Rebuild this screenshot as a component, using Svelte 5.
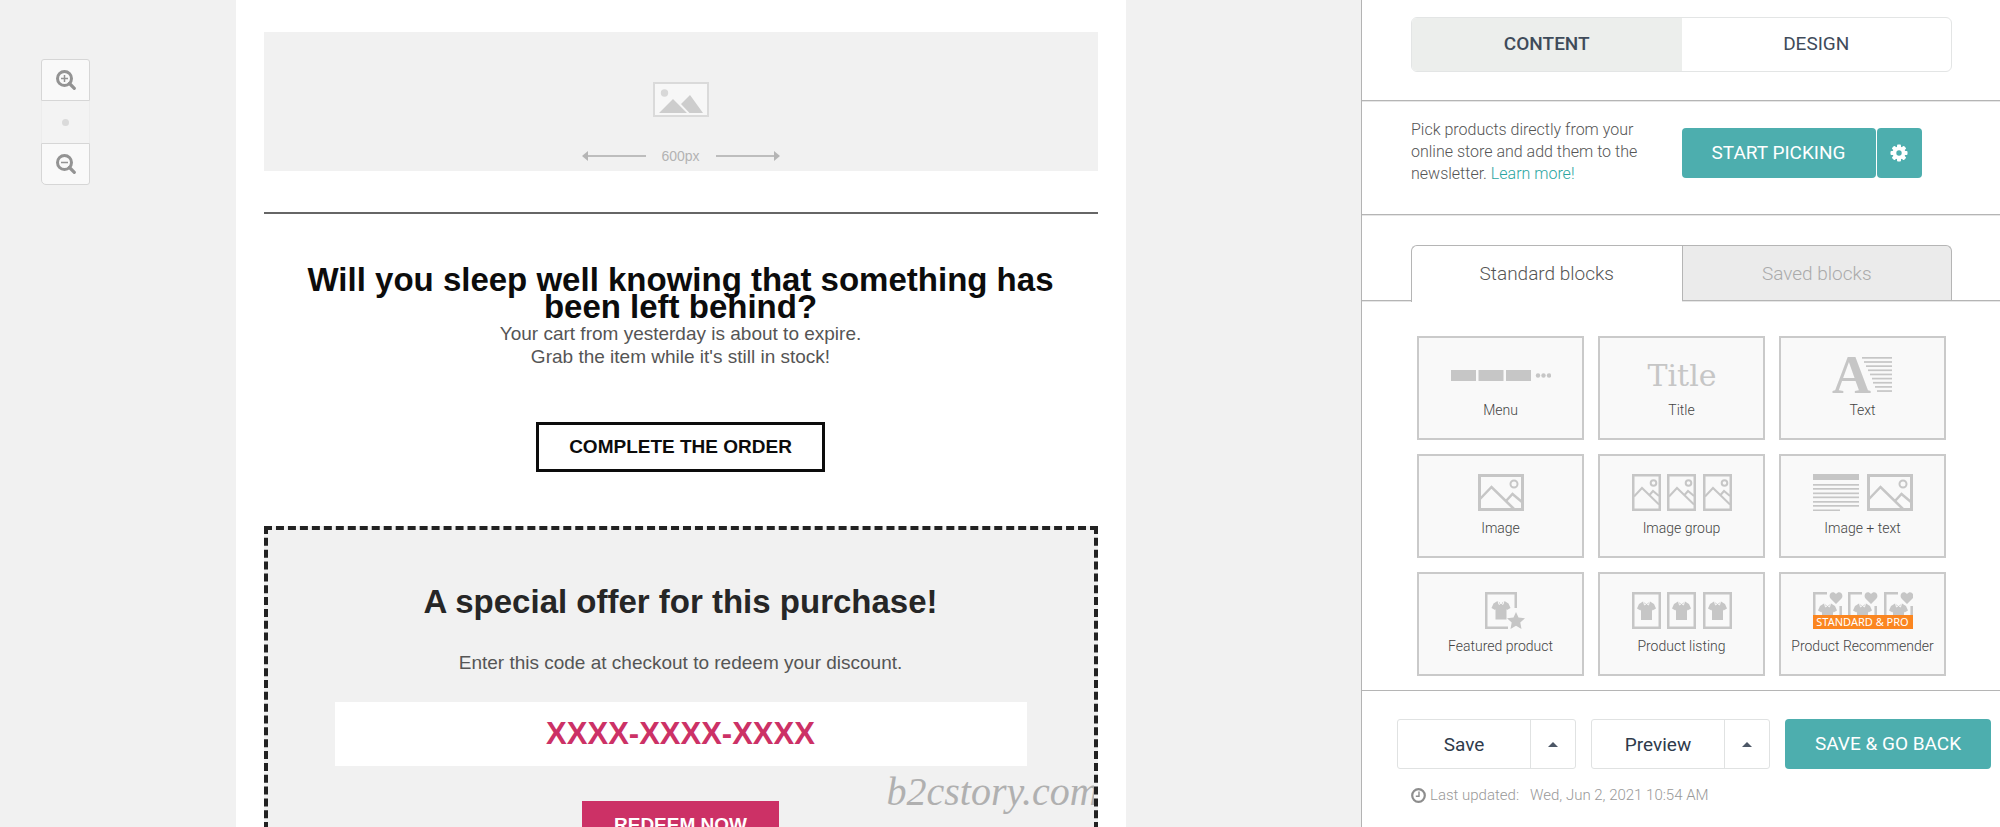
<script>
  const blocks = [
    { id: 'menu', label: 'Menu' },
    { id: 'title', label: 'Title' },
    { id: 'text', label: 'Text' },
    { id: 'image', label: 'Image' },
    { id: 'group', label: 'Image group' },
    { id: 'imagetext', label: 'Image + text' },
    { id: 'featured', label: 'Featured product' },
    { id: 'listing', label: 'Product listing' },
    { id: 'recommender', label: 'Product Recommender' }
  ];
  const slots = [0, 35, 71];
  const textLines = [49, 51, 53, 55, 57, 59, 60, 62, 64];
  let panel = $state('content');
  let library = $state('standard');
</script>

{#snippet picture(x)}
  <g transform="translate({x} 0)">
    <rect x="1.5" y="1.5" width="43" height="34" class="frame wide" />
    <path d="M2 25L13.500 13L36 35M28 27L34.500 20L44 28" class="frame" />
    <circle cx="36" cy="10" r="3.500" class="frame thin" />
  </g>
{/snippet}

{#snippet smallPicture(x)}
  <g transform="translate({x} 0)">
    <rect x="1.250" y="1.250" width="26.500" height="34.500" class="frame" />
    <path d="M2 22.500L10 14L27 30.500M17.500 21L21 17L27 22" class="frame thin" />
    <circle cx="21.500" cy="9" r="2.800" class="frame thin" />
  </g>
{/snippet}

{#snippet shirt(x, y)}
  <path
    transform="translate({x} {y})"
    class="fill"
    d="M6 0.500L9.500 3L13 0.500L17 3L19 7.500L15.500 9.500L15 8.500V19H4V8.500L3.500 9.500L0 7.500L2 3Z"
  />
  <path transform="translate({x} {y})" class="collar" d="M6.500 0.500L7.500 4L9.500 2.500L11.500 4L12.500 0.500" />
{/snippet}

{#snippet blockIcon(id)}
  <svg class="block-icon" viewBox="0 0 100 38" aria-hidden="true">
    {#if id === 'menu'}
      <rect x="0" y="14" width="25" height="11" class="fill" />
      <rect x="27.500" y="14" width="25" height="11" class="fill" />
      <rect x="55" y="14" width="25" height="11" class="fill" />
      <circle cx="87" cy="19.500" r="2.200" class="fill" />
      <circle cx="92.500" cy="19.500" r="2.200" class="fill" />
      <circle cx="98" cy="19.500" r="2.200" class="fill" />
    {:else if id === 'title'}
      <text x="50" y="30" text-anchor="middle" class="title-glyphs">Title</text>
    {:else if id === 'text'}
      <text x="19" y="37" class="letter">A</text>
      {#each textLines as left, i}
        <rect x={left} y={1 + i * 4.15} width={79 - left} height="1.700" class="fill" />
      {/each}
    {:else if id === 'image'}
      {@render picture(27)}
    {:else if id === 'group'}
      {#each slots as x}{@render smallPicture(x)}{/each}
    {:else if id === 'imagetext'}
      <rect x="0" y="0" width="46" height="6" class="fill" />
      {#each [10, 14, 18.5, 22.5, 27, 31] as y}
        <rect x="0" {y} width="46" height="1.700" class="fill" />
      {/each}
      <rect x="0" y="35.500" width="27" height="1.500" class="fill" />
      {@render picture(54)}
    {:else if id === 'featured'}
      <path d="M64.750 16V1.250H35.250V35.750H57" class="frame" />
      {@render shirt(40.5, 8.5)}
      <path class="fill" d="M65 20L67.500 25.500L74 26.300L69.300 30.500L70.500 37L65 33.800L59.500 37L60.700 30.500L56 26.300L62.500 25.500Z" />
    {:else if id === 'listing'}
      {#each slots as x}
        <rect x={x + 1.25} y="1.250" width="26.500" height="34.500" class="frame" />
        {@render shirt(x + 5, 9)}
      {/each}
    {:else}
      {#each slots as x}
        <path transform="translate({x} 0)" d="M14 1.250H1.250V25M27.700 14V25" class="frame" />
        {@render shirt(x + 5, 11)}
        <path transform="translate({x} 0)" class="fill" d="M23 12L17.500 6.500C14.500 2.500 19.500 -2.500 23 2C26.500 -2.500 31.500 2.500 28.500 6.500Z" />
      {/each}
    {/if}
  </svg>
{/snippet}

{#snippet magnifier(plus)}
  <svg width="20" height="20" viewBox="0 0 20 20" aria-hidden="true">
    <circle cx="8.500" cy="8.500" r="7" fill="none" stroke="#939393" stroke-width="3" />
    <path d="M13.500 13.500L18.300 18.300" stroke="#939393" stroke-width="3.200" stroke-linecap="round" />
    <path d={plus ? 'M5 8.500H12M8.500 5V12' : 'M5 8.500H12'} stroke="#939393" stroke-width="1.500" />
  </svg>
{/snippet}

<div class="editor">
  <main class="stage">
    <div class="zoom">
      <button aria-label="Zoom in">{@render magnifier(true)}</button>
      <button class="reset" aria-label="Reset zoom"><span></span></button>
      <button aria-label="Zoom out">{@render magnifier(false)}</button>
    </div>

    <article class="mail">
      <div class="placeholder">
        <svg width="56" height="35" viewBox="0 0 56 35" aria-hidden="true">
          <rect x="1" y="1" width="54" height="33" fill="#f7f7f7" stroke="#dadada" stroke-width="2" />
          <circle cx="11.500" cy="11" r="3.700" fill="#d8d8d8" />
          <path d="M6 31L20 17L34 31ZM28 22L37 13L50 31H36.500Z" fill="#cdcdcd" />
        </svg>
        <div class="measure">
          <svg width="64" height="10" viewBox="0 0 64 10" aria-hidden="true">
            <path d="M5 5H64" stroke="#bdbdbd" stroke-width="2" /><path d="M0 5L6 0V10Z" fill="#b5b5b5" />
          </svg>
          <span>600px</span>
          <svg width="64" height="10" viewBox="0 0 64 10" aria-hidden="true">
            <path d="M0 5H59" stroke="#bdbdbd" stroke-width="2" /><path d="M64 5L58 0V10Z" fill="#b5b5b5" />
          </svg>
        </div>
      </div>
      <hr />
      <h1>Will you sleep well knowing that something has been left behind?</h1>
      <p>Your cart from yesterday is about to expire.<br />Grab the item while it's still in stock!</p>
      <a class="order" href="#order">COMPLETE THE ORDER</a>
      <section class="coupon">
        <h2>A special offer for this purchase!</h2>
        <p>Enter this code at checkout to redeem your discount.</p>
        <div class="code">XXXX-XXXX-XXXX</div>
        <a class="redeem" href="#redeem">REDEEM NOW</a>
        <span class="watermark">b2cstory.com</span>
      </section>
    </article>
  </main>

  <aside>
    <div class="section modes">
      <div class="switch">
        <button class:active={panel === 'content'} onclick={() => (panel = 'content')}>CONTENT</button>
        <button class:active={panel === 'design'} onclick={() => (panel = 'design')}>DESIGN</button>
      </div>
    </div>

    <div class="section picker">
      <p>Pick products directly from your online store and add them to the newsletter. <a href="#learn">Learn more!</a></p>
      <div class="pick">
        <button class="primary">START PICKING</button>
        <button class="primary gear" aria-label="Picking settings">
          <svg width="18" height="18" viewBox="0 0 18 18" aria-hidden="true">
            <g fill="#fff">
              {#each [0, 45, 90, 135] as a}
                <rect x="7" y="0.500" width="4" height="17" rx="1" transform="rotate({a} 9 9)" />
              {/each}
              <circle cx="9" cy="9" r="6.500" />
            </g>
            <circle cx="9" cy="9" r="2.700" fill="#4daeae" />
          </svg>
        </button>
      </div>
    </div>

    <div class="tabs">
      <button class:active={library === 'standard'} onclick={() => (library = 'standard')}>Standard blocks</button>
      <button class:active={library === 'saved'} onclick={() => (library = 'saved')}>Saved blocks</button>
    </div>

    <div class="blocks">
      {#each blocks as block}
        <button class="block">
          {@render blockIcon(block.id)}
          {#if block.id === 'recommender'}<span class="badge">STANDARD &amp; PRO</span>{/if}
          <span class="name">{block.label}</span>
        </button>
      {/each}
    </div>

    <footer>
      <div class="actions">
        <div class="split">
          <button>Save</button>
          <button class="caret" aria-label="More save options"><i></i></button>
        </div>
        <div class="split">
          <button>Preview</button>
          <button class="caret" aria-label="More preview options"><i></i></button>
        </div>
        <button class="primary back">SAVE &amp; GO BACK</button>
      </div>
      <div class="updated">
        <svg width="15" height="15" viewBox="0 0 15 15" fill="none" stroke="#8d8d8d" aria-hidden="true">
          <circle cx="7.500" cy="7.500" r="6.300" stroke-width="2.200" />
          <path d="M8 3.500V8.300H4.800" stroke-width="1.400" />
        </svg>
        <span>Last updated:</span>
        <time>Wed, Jun 2, 2021 10:54 AM</time>
      </div>
    </footer>
  </aside>
</div>

<style>
  :global(body) { margin: 0; }
  * { box-sizing: border-box; }
  button { font: inherit; margin: 0; padding: 0; border: 0; background: none; color: inherit; cursor: pointer; }
  a { text-decoration: none; }
  svg { display: block; }

  .editor {
    display: grid;
    grid-template-columns: minmax(0, 1fr) 639px;
    height: 100vh;
    overflow: hidden;
    background: #f1f1f1;
    font-family: Roboto, sans-serif;
  }

  .stage { position: relative; min-width: 0; overflow: hidden; }
  .zoom {
    position: absolute;
    top: 59px;
    left: 41px;
    width: 49px;
    display: grid;
    grid-template-rows: repeat(3, 42px);
  }
  .zoom button {
    display: grid;
    place-items: center;
    background: #f9f9f9;
    border: 1px solid #d6d6d6;
    border-radius: 3px 3px 0 0;
  }
  .zoom button:last-child { border-radius: 0 0 3px 5px; }
  .zoom .reset { background: #f3f3f3; border-width: 0 1px; border-color: #ececec; border-radius: 0; }
  .reset span { width: 7px; height: 7px; border-radius: 50%; background: #dadada; }

  .mail {
    max-width: 890px;
    min-height: 100%;
    margin: 0 auto;
    padding: 32px 28px 0;
    background: #fff;
    font-family: "Liberation Sans", Arial, sans-serif;
    text-align: center;
  }
  .placeholder {
    display: flex;
    flex-direction: column;
    align-items: center;
    gap: 30px;
    height: 139px;
    padding-top: 50px;
    background: #f1f1f1;
  }
  .measure { display: flex; justify-content: space-between; align-items: center; width: 198px; font-size: 14px; line-height: 18px; color: #b3b3b3; }
  hr { margin: 41px 0 0; border: 0; border-top: 2px solid #666; }
  .mail h1 { margin: 52px 0 0; padding: 0 30px; font-size: 33px; line-height: 27px; color: #0c0c0c; }
  .mail p { margin: 0; font-size: 19px; line-height: 23px; color: #555; }
  .mail h1 + p { margin-top: 2px; }
  .order {
    display: inline-block;
    margin-top: 54px;
    padding: 11px 30px;
    border: 3px solid #0c0c0c;
    font-size: 19px;
    font-weight: 700;
    line-height: 22px;
    color: #0c0c0c;
  }
  .coupon {
    position: relative;
    margin-top: 54px;
    padding: 52px 67px 60px;
    border: 4px dashed #222;
    background: #f1f1f1;
  }
  .coupon h2 { margin: 0; font-size: 33px; line-height: 40px; color: #262626; }
  .coupon p { margin-top: 29px; }
  .code { margin-top: 28px; background: #fff; color: #cc3166; font-size: 31px; font-weight: 700; line-height: 64px; }
  .redeem {
    display: inline-block;
    margin-top: 35px;
    padding: 12px 32px;
    background: #cc3166;
    color: #fff;
    font-size: 19px;
    font-weight: 700;
    line-height: 24px;
  }
  .watermark {
    position: absolute;
    left: 619px;
    top: 239px;
    right: 0;
    overflow: hidden;
    text-align: left;
    white-space: nowrap;
    font: italic 40px/46px "Liberation Serif", serif;
    color: #b0b0b0;
  }

  aside { display: flex; flex-direction: column; min-width: 0; border-left: 1px solid #b3b3b3; background: #fff; }
  .section { padding: 0 48px 0 49px; border-bottom: 1px solid #b5b5b5; box-shadow: 0 1px #e6e6e6; }
  .modes { padding-top: 17px; padding-bottom: 28px; }
  .switch { display: grid; grid-template-columns: 1fr 1fr; height: 55px; border: 1px solid #e3e5e5; border-radius: 6px; overflow: hidden; font-size: 19px; color: #3f4b5a; }
  .switch button { padding-bottom: 2px; }
  .switch .active { background: #eceeec; font-weight: 500; }

  .picker { display: grid; grid-template-columns: 1fr 1fr; height: 114px; padding-top: 18px; }
  .picker p { margin: 0; max-width: 240px; font-size: 16px; font-weight: 300; line-height: 22px; color: #555; }
  .picker a { color: #2aa5a0; }
  .pick { display: flex; gap: 1px; height: 50px; margin-top: 9px; }
  .primary { padding: 0 30px; border-radius: 4px; background: #4daeae; color: #fff; font-size: 19px; line-height: 50px; white-space: nowrap; }
  .gear { display: grid; place-items: center; width: 45px; padding: 0; }

  .tabs { display: grid; grid-template-columns: 1fr 1fr; height: 86px; padding: 30px 48px 0 49px; border-bottom: 1px solid #b5b5b5; box-shadow: 0 1px #e6e6e6; }
  .tabs button { height: 55px; border: 1px solid #b5b5b5; border-bottom: 0; background: #ebebeb; font-size: 19px; font-weight: 300; color: #aaa; }
  .tabs button:first-child { border-right: 0; border-radius: 6px 0 0 0; }
  .tabs button:last-child { border-radius: 0 6px 0 0; }
  .tabs .active { height: 57px; padding-bottom: 2px; background: #fff; color: #555; }

  .blocks { display: grid; grid-template-columns: repeat(3, 1fr); grid-auto-rows: 104px; gap: 14px; padding: 35px 54px 14px 55px; }
  .block { position: relative; display: flex; flex-direction: column; align-items: center; padding-top: 18px; border: 2px solid #cacaca; background: #f9f9f9; color: #444; }
  .block-icon { width: 100px; height: 38px; flex: none; }
  .name { margin-top: 6px; font-size: 14px; font-weight: 300; line-height: 20px; }
  .fill { fill: #c6c6c6; }
  .frame { fill: none; stroke: #c6c6c6; stroke-width: 2.5; }
  .wide { stroke-width: 3; }
  .thin { stroke-width: 2; }
  .collar { fill: none; stroke: #f9f9f9; stroke-width: 1; }
  .title-glyphs { font: 30px "DejaVu Serif", serif; fill: #c6c6c6; }
  .letter { font: bold 54px "Liberation Serif", serif; fill: #c6c6c6; }
  .badge { position: absolute; top: 41px; width: 100px; background: #fb8620; color: #fff; font: 11px/14px "Noto Sans", sans-serif; white-space: nowrap; }

  footer { flex: 1; border-top: 1px solid #b5b5b5; padding: 28px 8px 0 35px; }
  .actions { display: flex; gap: 15px; font-size: 19px; color: #2f3b4b; }
  .split { display: grid; grid-template-columns: 1fr 45px; width: 179px; height: 50px; border: 1px solid #e0e2e2; border-radius: 3px; }
  .caret { display: grid; place-items: center; border-left: 1px solid #e0e2e2; }
  .caret i { border: 5px solid transparent; border-top: 0; border-bottom: 5px solid #4c5766; }
  .updated { display: flex; align-items: center; margin: 15px 0 0 14px; font-size: 15px; font-weight: 300; line-height: 22px; color: #999; }
  .updated span { margin-left: 4px; }
  .updated time { margin-left: 11px; }
</style>
